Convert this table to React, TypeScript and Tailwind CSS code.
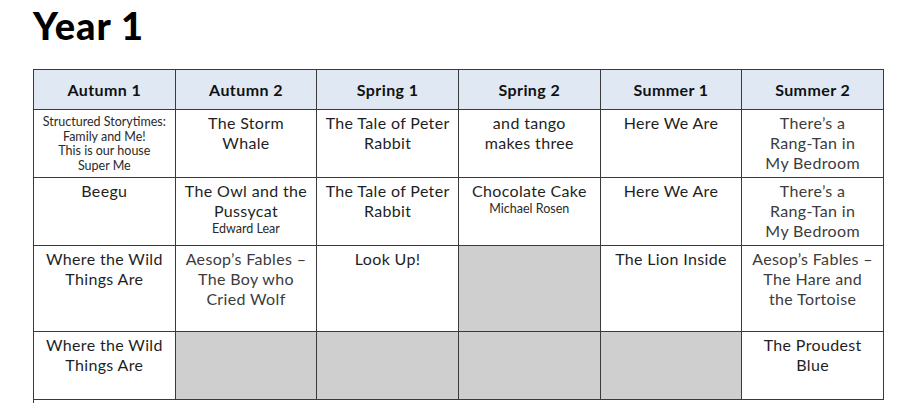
import React from 'react';

type Cell = { lines?: string[]; sub?: string[]; small?: boolean; gray?: boolean; soft?: boolean };

const headers = ['Autumn 1', 'Autumn 2', 'Spring 1', 'Spring 2', 'Summer 1', 'Summer 2'];

const rows: { h: string; cells: Cell[] }[] = [
  {
    h: 'h-[68px]',
    cells: [
      { lines: ['Structured Storytimes:', 'Family and Me!', 'This is our house', 'Super Me'], small: true },
      { lines: ['The Storm', 'Whale'] },
      { lines: ['The Tale of Peter', 'Rabbit'] },
      { lines: ['and tango', 'makes three'] },
      { lines: ['Here We Are'] },
      { lines: ['There’s a', 'Rang-Tan in', 'My Bedroom'], soft: true },
    ],
  },
  {
    h: 'h-[68px]',
    cells: [
      { lines: ['Beegu'] },
      { lines: ['The Owl and the', 'Pussycat'], sub: ['Edward Lear'] },
      { lines: ['The Tale of Peter', 'Rabbit'] },
      { lines: ['Chocolate Cake'], sub: ['Michael Rosen'] },
      { lines: ['Here We Are'] },
      { lines: ['There’s a', 'Rang-Tan in', 'My Bedroom'], soft: true },
    ],
  },
  {
    h: 'h-[86px]',
    cells: [
      { lines: ['Where the Wild', 'Things Are'] },
      { lines: ['Aesop’s Fables –', 'The Boy who', 'Cried Wolf'], soft: true },
      { lines: ['Look Up!'] },
      { gray: true },
      { lines: ['The Lion Inside'] },
      { lines: ['Aesop’s Fables –', 'The Hare and', 'the Tortoise'], soft: true },
    ],
  },
  {
    h: 'h-[68px]',
    cells: [
      { lines: ['Where the Wild', 'Things Are'] },
      { gray: true },
      { gray: true },
      { gray: true },
      { gray: true },
      { lines: ['The Proudest', 'Blue'] },
    ],
  },
];

const BookCell = ({ cell }: { cell: Cell }) => (
  <td
    className={`border border-[#3a3a3a] align-top text-center p-0 ${cell.gray ? 'bg-[#d0cfd0]' : 'bg-white'}`}
  >
    {cell.lines && (
      <div
        className={
          cell.small
            ? 'pt-[5px] text-[12.5px] leading-[14.5px] text-[#2a2a2a]'
            : `pt-[3px] text-[16px] leading-[20px] tracking-[0.35px] ${cell.soft ? 'text-[#3c3c3c]' : 'text-[#1f1f1f]'}`
        }
      >
        {cell.lines.map((l, i) => (
          <div key={i}>{l}</div>
        ))}
        {cell.sub?.map((s, i) => (
          <div key={i} className="text-[12.5px] leading-[15px] tracking-normal text-[#2a2a2a]">{s}</div>
        ))}
      </div>
    )}
  </td>
);

export default function App() {
  return (
    <div className="w-[901px] h-[403px] overflow-hidden bg-white pl-[33px] pt-[3px]" style={{ fontFamily: 'Lato, "Noto Sans", sans-serif' }}>
      <h1 className="text-[38px] leading-[45px] font-black text-black tracking-[1px]">Year 1</h1>
      <table className="mt-[21px] w-[851px] table-fixed border-collapse">
        <thead>
          <tr className="h-[40px] bg-[#dfe8f3]">
            {headers.map((h) => (
              <th key={h} className="border border-[#3a3a3a] text-[16px] font-bold tracking-[0.4px] text-[#111] text-center">
                {h}
              </th>
            ))}
          </tr>
        </thead>
        <tbody>
          {rows.map((r, i) => (
            <tr key={i} className={r.h}>
              {r.cells.map((c, j) => (
                <BookCell key={j} cell={c} />
              ))}
            </tr>
          ))}
          <tr className="h-[30px]">
            <td colSpan={6} className="border-l border-t border-[#3a3a3a]" />
          </tr>
        </tbody>
      </table>
    </div>
  );
}
